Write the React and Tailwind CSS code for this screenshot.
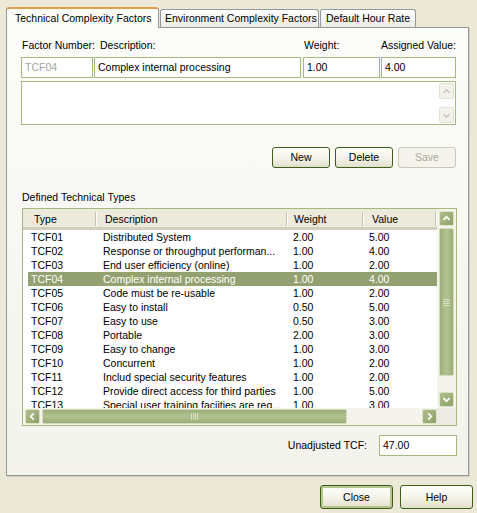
import React from "react";

const rows = [
  ["TCF01", "Distributed System", "2.00", "5.00"],
  ["TCF02", "Response or throughput performan...", "1.00", "4.00"],
  ["TCF03", "End user efficiency (online)", "1.00", "2.00"],
  ["TCF04", "Complex internal processing", "1.00", "4.00"],
  ["TCF05", "Code must be re-usable", "1.00", "2.00"],
  ["TCF06", "Easy to install", "0.50", "5.00"],
  ["TCF07", "Easy to use", "0.50", "3.00"],
  ["TCF08", "Portable", "2.00", "3.00"],
  ["TCF09", "Easy to change", "1.00", "3.00"],
  ["TCF10", "Concurrent", "1.00", "2.00"],
  ["TCF11", "Includ special security features", "1.00", "2.00"],
  ["TCF12", "Provide direct access for third parties", "1.00", "5.00"],
  ["TCF13", "Special user training faciities are req...", "1.00", "3.00"],
];

const Chevron = ({ dir, color = "#ffffff" }) => {
  const pts = {
    up: "4,9 7.5,5.5 11,9",
    down: "4,6 7.5,9.5 11,6",
    left: "9,4 5.5,7.5 9,11",
    right: "6,4 9.5,7.5 6,11",
  };
  return (
    <svg width="15" height="15" viewBox="0 0 15 15">
      <polyline points={pts[dir]} fill="none" stroke={color} strokeWidth="2" />
    </svg>
  );
};

const ArrowBtn = ({ dir, className = "" }) => (
  <div
    className={
      "flex items-center justify-center rounded-[2px] border border-[#D9E2C4] bg-gradient-to-br from-[#AEBE8C] to-[#8FA26A] " +
      className
    }
  >
    <Chevron dir={dir} />
  </div>
);

const DisabledArrow = ({ dir }) => (
  <div className="flex h-[16px] w-[15px] items-center justify-center rounded-[2px] border border-[#E2E0D3] bg-[#F3F2EB]">
    <Chevron dir={dir} color="#CFCDBF" />
  </div>
);

const Input = ({ className = "", children, muted }) => (
  <div
    className={
      "flex h-[21px] items-center border border-[#A5B97F] bg-white pl-[3px] " +
      (muted ? "text-[#A3A3A3] " : "text-black ") +
      className
    }
  >
    {children}
  </div>
);

const Button = ({ children, className = "", disabled, primary }) => (
  <div
    className={
      "flex items-center justify-center rounded-[3px] border " +
      (disabled
        ? "border-[#CBC8B8] bg-[#F5F4EC] text-[#ACA899] "
        : "border-[#3F5C1B] bg-gradient-to-b from-[#FFFFFD] via-[#F5F4EA] to-[#E2DFCC] text-black ") +
      (primary ? "shadow-[inset_0_0_0_2px_#B6C68F] " : "") +
      className
    }
  >
    {children}
  </div>
);

const HeadCell = ({ w, pl, children }) => (
  <div className={"flex h-full shrink-0 items-center justify-between " + w}>
    <span className={pl + " pt-[3px]"}>{children}</span>
    <span className="mt-[2px] h-[14px] w-[2px] border-l border-r border-l-[#C5C2B0] border-r-white" />
  </div>
);

export default function App() {
  return (
    <div className="h-[513px] w-[477px] overflow-hidden bg-[#ECE9D8] font-['Liberation_Sans',Arial,sans-serif] text-[10.5px] leading-[13px] text-black">
      {/* tabs */}
      <div className="flex h-[27px] items-end pl-[6px]">
        <div className="relative z-10 -mb-px flex h-[21px] w-[153px] items-center rounded-t-[3px] border-x border-t-2 border-x-[#919B9C] border-t-[#E3A04F] bg-[#FCFCFA] pl-[8px]">
          Technical Complexity Factors
        </div>
        <div className="ml-[1px] flex h-[18px] w-[159px] items-center rounded-t-[3px] border border-b-0 border-[#919B9C] bg-gradient-to-b from-white to-[#ECEBE4] pl-[4px]">
          Environment Complexity Factors
        </div>
        <div className="ml-[1px] flex h-[18px] w-[96px] items-center rounded-t-[3px] border border-b-0 border-[#919B9C] bg-gradient-to-b from-white to-[#ECEBE4] pl-[5px]">
          Default Hour Rate
        </div>
      </div>

      {/* panel */}
      <div className="ml-[6px] flex h-[449px] w-[463px] flex-col border border-[#919B9C] bg-gradient-to-b from-[#FCFCFA] to-[#F3F2EC] shadow-[1px_1px_0_#D2D0C0]">
        <div className="flex flex-col pl-[14px] pr-[12px]">
          <div className="mt-[11px] flex h-[13px] items-center pl-[1px]">
            <span className="w-[78px]">Factor Number:</span>
            <span className="w-[204px]">Description:</span>
            <span className="w-[77px]">Weight:</span>
            <span>Assigned Value:</span>
          </div>
          <div className="mt-[5px] flex">
            <Input className="w-[72px]" muted>
              TCF04
            </Input>
            <Input className="ml-[1px] w-[207px]">Complex internal processing</Input>
            <Input className="ml-[2px] w-[77px]">1.00</Input>
            <Input className="ml-[1px] w-[75px]">4.00</Input>
          </div>
          <div className="mt-[3px] flex h-[44px] justify-end border border-[#A5B97F] bg-white">
            <div className="flex w-[17px] flex-col justify-between px-px py-px">
              <DisabledArrow dir="up" />
              <DisabledArrow dir="down" />
            </div>
          </div>
          <div className="mt-[22px] flex justify-end gap-[5px]">
            <Button className="h-[21px] w-[58px]">New</Button>
            <Button className="h-[21px] w-[58px]">Delete</Button>
            <Button className="h-[21px] w-[58px]" disabled>
              Save
            </Button>
          </div>
          <div className="mt-[23px] h-[13px] pl-[1px]">Defined Technical Types</div>
        </div>

        <div className="flex flex-col pl-[15px] pr-[11px]">
          {/* list */}
          <div className="mt-[4px] flex h-[218px] flex-col border border-[#A5B97F] bg-white">
            <div className="flex h-[199px]">
              <div className="flex w-[414px] flex-col overflow-hidden">
                <div className="flex h-[21px] shrink-0 border-b-[3px] border-b-[#D3CFBE] bg-[#EBEADB]">
                  <HeadCell w="w-[74px]" pl="pl-[11px]">Type</HeadCell>
                  <HeadCell w="w-[191px]" pl="pl-[8px]">Description</HeadCell>
                  <HeadCell w="w-[76px]" pl="pl-[6px]">Weight</HeadCell>
                  <HeadCell w="w-[73px]" pl="pl-[8px]">Value</HeadCell>
                </div>
                <div className="flex flex-col">
                  {rows.map((r) => {
                    const sel = r[0] === "TCF04";
                    return (
                      <div
                        key={r[0]}
                        className={
                          "ml-[5px] flex h-[14px] shrink-0 items-center leading-[14px] " +
                          (sel ? "bg-[#93A070] text-white" : "")
                        }
                      >
                        <span className="w-[69px] shrink-0 pl-[3px]">{r[0]}</span>
                        <span className="w-[191px] shrink-0 truncate pl-[6px]">{r[1]}</span>
                        <span className="w-[76px] shrink-0 pl-[5px]">{r[2]}</span>
                        <span className="w-[73px] shrink-0 pl-[5px]">{r[3]}</span>
                      </div>
                    );
                  })}
                </div>
              </div>
              {/* vertical scrollbar */}
              <div className="flex w-[19px] flex-col bg-[#F4F3EC] pb-[1px] pl-[2px] pr-[2px] pt-[2px]">
                <ArrowBtn dir="up" className="h-[15px] w-[15px]" />
                <div className="mt-[2px] flex h-[148px] w-[15px] items-center justify-center rounded-[2px] border border-[#D3DCBF] bg-gradient-to-r from-[#9BAE78] via-[#B2C391] to-[#9BAE78]">
                  <div className="flex flex-col gap-[1px]">
                    <span className="h-px w-[7px] bg-[#D7E0C4]" />
                    <span className="h-px w-[7px] bg-[#D7E0C4]" />
                    <span className="h-px w-[7px] bg-[#D7E0C4]" />
                    <span className="h-px w-[7px] bg-[#D7E0C4]" />
                  </div>
                </div>
                <div className="flex-1" />
                <ArrowBtn dir="down" className="h-[15px] w-[15px]" />
              </div>
            </div>
            {/* horizontal scrollbar */}
            <div className="flex h-[17px] bg-[#F4F3EC]">
              <div className="flex w-[414px] items-center pl-[2px]">
                <ArrowBtn dir="left" className="h-[15px] w-[15px]" />
                <div className="ml-[2px] flex h-[15px] w-[305px] items-center justify-center rounded-[2px] border border-[#D3DCBF] bg-gradient-to-b from-[#9BAE78] via-[#B2C391] to-[#9BAE78]">
                  <div className="flex gap-[1px]">
                    <span className="h-[7px] w-px bg-[#D7E0C4]" />
                    <span className="h-[7px] w-px bg-[#D7E0C4]" />
                    <span className="h-[7px] w-px bg-[#D7E0C4]" />
                    <span className="h-[7px] w-px bg-[#D7E0C4]" />
                  </div>
                </div>
                <div className="flex-1" />
                <ArrowBtn dir="right" className="h-[15px] w-[15px]" />
              </div>
              <div className="flex-1 bg-[#ECEBE3]" />
            </div>
          </div>

          <div className="mt-[9px] flex items-center justify-end">
            <span className="mr-[12px]">Unadjusted TCF:</span>
            <Input className="w-[78px]">47.00</Input>
          </div>
        </div>
      </div>

      {/* dialog buttons */}
      <div className="mt-[9px] flex justify-end gap-[7px] pr-[4px]">
        <Button className="h-[24px] w-[73px]" primary>
          Close
        </Button>
        <Button className="h-[24px] w-[73px]">Help</Button>
      </div>
    </div>
  );
}
